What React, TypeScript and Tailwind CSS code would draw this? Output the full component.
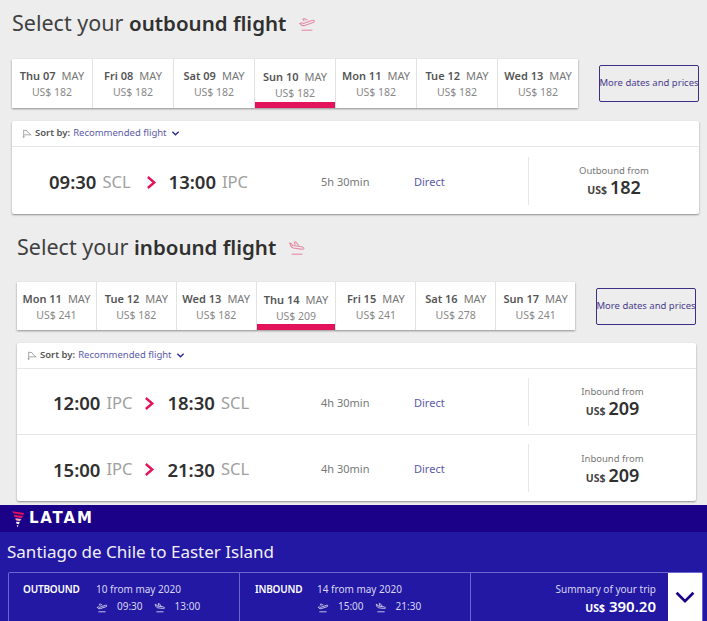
import React from 'react';

const font = { fontFamily: '"Noto Sans", "Open Sans", sans-serif' };

type DateCell = { day: string; price: string; active?: boolean };
type Flight = { dep: string; from: string; arr: string; to: string; duration: string; label: string; price: string };

const outDates: DateCell[] = [
  { day: 'Thu 07', price: '182' },
  { day: 'Fri 08', price: '182' },
  { day: 'Sat 09', price: '182' },
  { day: 'Sun 10', price: '182', active: true },
  { day: 'Mon 11', price: '182' },
  { day: 'Tue 12', price: '182' },
  { day: 'Wed 13', price: '182' },
];

const inDates: DateCell[] = [
  { day: 'Mon 11', price: '241' },
  { day: 'Tue 12', price: '182' },
  { day: 'Wed 13', price: '182' },
  { day: 'Thu 14', price: '209', active: true },
  { day: 'Fri 15', price: '241' },
  { day: 'Sat 16', price: '278' },
  { day: 'Sun 17', price: '241' },
];

function PlaneIcon({ className, landing }: { className?: string; landing?: boolean }) {
  return (
    <svg viewBox="0 0 20 20" fill="none" stroke="currentColor" strokeWidth="1.2" className={className}>
      {landing ? (
        <g>
          <path d="M2 5.500l2 .8 1 2 10 1.500c1.500.3 3 1.300 2.700 2-.3.700-2 .8-3.500.6l-8.500-1.200C4 10.500 2.500 9 2 5.500z" />
          <path d="M8 8L7 4.500l1.500-.3L12 8.500" />
        </g>
      ) : (
        <g>
          <path d="M2 10.500l2-.8 2 .9 9.500-3.400c1.500-.5 3 .2 2.800 1-.2.700-1.500 1.300-3 1.800l-8 2.700c-1.500.5-3 0-4-.8z" />
          <path d="M7 8L5.500 5.500 7 5l3.500 2" />
        </g>
      )}
      <path d="M4 18h12" />
    </svg>
  );
}

function DateStrip({ dates }: { dates: DateCell[] }) {
  return (
    <div className="flex-1 self-stretch flex bg-white shadow-[0_1px_2px_rgba(0,0,0,0.4)]">
      {dates.map((d) => (
        <div key={d.day} className="relative flex-1 flex flex-col items-center pt-[9px] border-r border-[#e2e2e2] last:border-r-0">
          <div className={`text-[11px] leading-[16px] whitespace-nowrap ${d.active ? 'mt-px' : ''}`}>
            <span className="font-semibold text-[#555]">{d.day}</span>
            <span className="ml-[6px] text-[#777]">MAY</span>
          </div>
          <div className="text-[10.5px] leading-[14px] mt-px text-[#888]">US$ {d.price}</div>
          {d.active && <div className="absolute left-0 right-0 bottom-0 h-[6px] bg-[#e3135b]" />}
        </div>
      ))}
    </div>
  );
}

function SortBar() {
  return (
    <div className="h-[26px] flex items-center pl-[10px] border-b border-[#e6e6e6] text-[9.5px]">
      <svg viewBox="0 0 12 12" className="w-[10px] h-[10px] text-[#999]" fill="none" stroke="currentColor" strokeWidth="1">
        <path d="M2 1v9M1 9l1 1.500L3 9M2 1.500l4 .5 2 3 3 2H2" />
      </svg>
      <span className="ml-[3px] font-semibold text-[#555]">Sort by:</span>
      <span className="ml-[3px] text-[#5c5aa8]">Recommended flight</span>
      <svg viewBox="0 0 10 10" className="w-[9px] h-[9px] ml-[4px] text-[#2a2a90]" fill="none" stroke="currentColor" strokeWidth="1.5">
        <path d="M1.500 3l3.500 3.500L8.500 3" />
      </svg>
    </div>
  );
}

function FlightRow({ f, leftClass, arrowClass, rowHeight, last }: { f: Flight; leftClass: string; arrowClass: string; rowHeight: string; last?: boolean }) {
  return (
    <div className={`flex items-center ${rowHeight} ${last ? '' : 'border-b border-[#e6e6e6]'}`}>
      <div className={`${leftClass} pt-[3px] flex items-center whitespace-nowrap`}>
        <span className="text-[18.5px] font-semibold text-[#303030]">{f.dep}</span>
        <span className="ml-[6px] text-[16.5px] text-[#a0a0a0]">{f.from}</span>
        <svg viewBox="0 0 12 16" className={`w-[11px] h-[15px] text-[#e3135b] ${arrowClass}`} fill="none" stroke="currentColor" strokeWidth="2.6">
          <path d="M2 2l7 6-7 6" />
        </svg>
        <span className="ml-[12px] text-[18.5px] font-semibold text-[#303030]">{f.arr}</span>
        <span className="ml-[6px] text-[16.5px] text-[#a0a0a0]">{f.to}</span>
      </div>
      <div className="w-[137px] pl-[44px] pt-[3px] text-[11px] text-[#777]">{f.duration}</div>
      <div className="w-[114px] pt-[3px] text-[11px] text-[#5c5aa8]">Direct</div>
      <div className="flex-1 h-[48px] border-l border-[#e8e8e8] flex flex-col items-center justify-center pt-[4px]">
        <div className="text-[9.5px] leading-[13px] text-[#777]">{f.label}</div>
        <div className="flex items-baseline leading-[21px]">
          <span className="text-[10.5px] font-bold text-[#444] mr-[3px]">US$</span>
          <span className="text-[18px] font-semibold text-[#303030]">{f.price}</span>
        </div>
      </div>
    </div>
  );
}

function Section({
  lead,
  dates,
  flights,
  landing,
  leftClass,
  arrowClass,
  rowHeight,
  datesClass,
  className,
}: {
  lead: string;
  dates: DateCell[];
  flights: Flight[];
  landing?: boolean;
  leftClass: string;
  arrowClass: string;
  rowHeight: string;
  datesClass: string;
  className?: string;
}) {
  return (
    <section className={className}>
      <div className="flex items-center h-[30px]">
        <h2 className="text-[21.5px] text-[#404040] whitespace-nowrap">
          Select your <span className="font-semibold text-[#303030] text-[20.5px]">{lead} flight</span>
        </h2>
        <PlaneIcon landing={landing} className="w-[18px] h-[18px] ml-[12px] text-[#e58aa5]" />
      </div>
      <div className={`flex items-center ${datesClass}`}>
        <DateStrip dates={dates} />
        <button className="ml-[21px] w-[100px] h-[37px] rounded-[2px] border border-[#3b2f86] text-[9.5px] text-[#4a3c8c] whitespace-nowrap flex items-center justify-center">
          More dates and prices
        </button>
      </div>
      <div className="mt-[13px] bg-white rounded-[2px] shadow-[0_1px_2px_rgba(0,0,0,0.4)]">
        <SortBar />
        {flights.map((f, i) => (
          <FlightRow key={f.dep} f={f} leftClass={leftClass} arrowClass={arrowClass} rowHeight={rowHeight} last={i === flights.length - 1} />
        ))}
      </div>
    </section>
  );
}

function LatamLogo() {
  return (
    <div className="flex items-center">
      <svg viewBox="0 0 16 20" className="w-[14px] h-[20px]">
        <path d="M1 1l14 2-1 2.500L3 3.500z" fill="#e3135b" />
        <path d="M3 5l11 1.500L12 9 4 7.500z" fill="#e3135b" />
        <path d="M5 9l7 1-2 2.500-4.500-1z" fill="#f5a0bd" />
        <path d="M6 13l4 .5-1 2.500-3-1zM6.500 17l2 .2-1 2.300z" fill="#fff" />
      </svg>
      <span className="ml-[4px] text-[15px] leading-none font-bold text-white tracking-[0.12em]" style={{ fontFamily: '"DejaVu Sans", sans-serif' }}>
        LATAM
      </span>
    </div>
  );
}

function TripLeg({ label, labelClass, date, dep, arr, className }: { label: string; labelClass: string; date: string; dep: string; arr: string; className?: string }) {
  return (
    <div className={`flex pt-[9px] text-white ${className}`}>
      <div className={`text-[10px] leading-[15px] font-semibold tracking-[-0.02em] whitespace-nowrap ${labelClass}`}>{label}</div>
      <div className="text-[10px] leading-[15px] text-[#d8d6f2]">
        <div>{date}</div>
        <div className="flex items-center mt-[2px]">
          <PlaneIcon className="w-[12px] h-[12px] text-white" />
          <span className="ml-[9px]">{dep}</span>
          <PlaneIcon landing className="w-[12px] h-[12px] ml-[11px] text-white" />
          <span className="ml-[9px]">{arr}</span>
        </div>
      </div>
    </div>
  );
}

export default function App() {
  const outbound: Flight[] = [
    { dep: '09:30', from: 'SCL', arr: '13:00', to: 'IPC', duration: '5h 30min', label: 'Outbound from', price: '182' },
  ];
  const inbound: Flight[] = [
    { dep: '12:00', from: 'IPC', arr: '18:30', to: 'SCL', duration: '4h 30min', label: 'Inbound from', price: '209' },
    { dep: '15:00', from: 'IPC', arr: '21:30', to: 'SCL', duration: '4h 30min', label: 'Inbound from', price: '209' },
  ];

  return (
    <div className="w-[707px] h-[621px] overflow-hidden flex flex-col bg-[#ededed]" style={font}>
      <Section
        lead="outbound"
        dates={outDates}
        flights={outbound}
        leftClass="w-[265px] pl-[37px]"
        arrowClass="ml-[15px]"
        rowHeight="h-[67px]"
        datesClass="h-[49px] mt-[21px]"
        className="ml-[12px] mr-[8px] mt-[8px]"
      />
      <Section
        lead="inbound"
        dates={inDates}
        flights={inbound}
        landing
        leftClass="w-[260px] pl-[36px]"
        arrowClass="ml-[12px]"
        rowHeight="h-[66px]"
        datesClass="h-[48px] mt-[20px]"
        className="ml-[17px] mr-[11px] mt-[18px]"
      />

      <footer className="mt-[4px] flex-1 flex flex-col bg-[#2318a3]">
        <div className="h-[27px] flex items-center pl-[11px] bg-[#1b0088]">
          <LatamLogo />
        </div>
        <div className="pl-[7px] pt-[6px] h-[40px] text-[17px] leading-[28px] text-[#f0effa]">Santiago de Chile to Easter Island</div>
        <div className="ml-[8px] mr-[4px] flex-1 flex rounded-t-[2px] border border-b-0 border-[#6d66cf]">
          <TripLeg label="OUTBOUND" labelClass="w-[73px]" date="10 from may 2020" dep="09:30" arr="13:00" className="w-[231px] border-r border-[#6d66cf] pl-[14px]" />
          <TripLeg label="INBOUND" labelClass="w-[62px]" date="14 from may 2020" dep="15:00" arr="21:30" className="w-[231px] border-r border-[#6d66cf] pl-[15px]" />
          <div className="flex-1 flex flex-col items-end pt-[9px] pr-[12px] text-white">
            <div className="text-[10px] leading-[15px] text-[#d8d6f2]">Summary of your trip</div>
            <div className="flex items-baseline leading-[18px]">
              <span className="text-[10.5px] font-bold mr-[4px]">US$</span>
              <span className="text-[15px] font-semibold">390.20</span>
            </div>
          </div>
          <div className="w-[34px] bg-white flex items-center justify-center">
            <svg viewBox="0 0 20 20" className="w-[24px] h-[24px] text-[#1b0088]" fill="none" stroke="currentColor" strokeWidth="2.2">
              <path d="M3 6.500l7 7 7-7" />
            </svg>
          </div>
        </div>
      </footer>
    </div>
  );
}
